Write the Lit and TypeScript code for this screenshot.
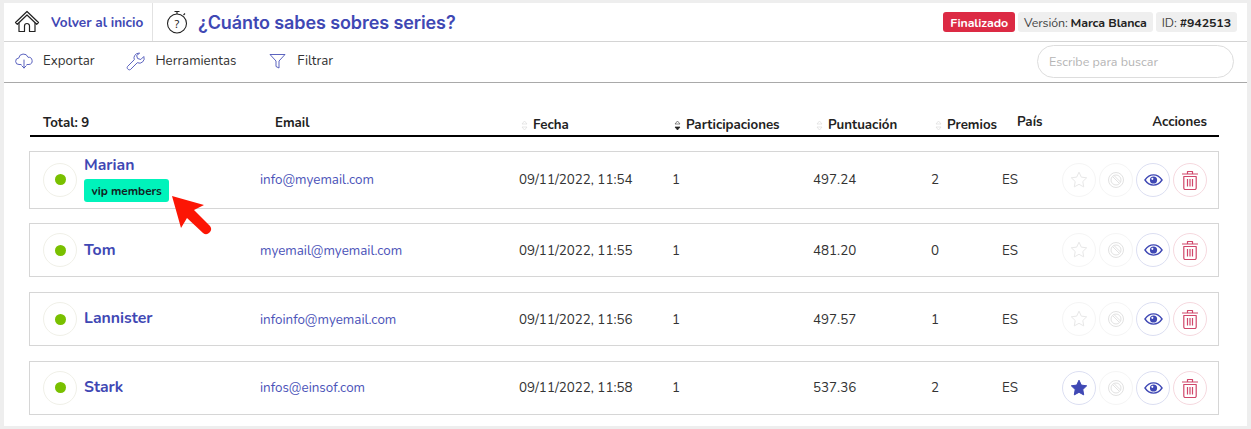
import { LitElement, html, css, svg } from "lit";
import { customElement } from "lit/decorators.js";

const rows = [
  { name: "Marian", tag: "vip members", email: "info@myemail.com", date: "09/11/2022, 11:54", part: "1", score: "497.24", prizes: "2", fav: false },
  { name: "Tom", email: "myemail@myemail.com", date: "09/11/2022, 11:55", part: "1", score: "481.20", prizes: "0", fav: false },
  { name: "Lannister", email: "infoinfo@myemail.com", date: "09/11/2022, 11:56", part: "1", score: "497.57", prizes: "1", fav: false },
  { name: "Stark", email: "infos@einsof.com", date: "09/11/2022, 11:58", part: "1", score: "537.36", prizes: "2", fav: true },
];

const sortIcon = (active = false) => html`<svg class="sort" width="7" height="11" viewBox="0 0 7 11">
  <path d="M3.500 1 6 4H1z" fill="none" stroke=${active ? "#555" : "#ddd"} stroke-width=".7"/>
  <path d="M3.500 10 6 7H1z" fill=${active ? "#222" : "none"} stroke=${active ? "#222" : "#ddd"} stroke-width=".7"/>
</svg>`;

const starPath = svg`<path d="M10 2.200l2.300 4.900 5.400.7-3.900 3.700.9 5.400L10 14.300l-4.700 2.600.9-5.400-3.900-3.700 5.400-.7z"/>`;

@customElement("app-root")
export class AppRoot extends LitElement {
  static styles = css`
    :host { display: block; width: 1251px; height: 429px; background: #eeeeee; box-sizing: border-box; padding: 3px 4px; font-family: "Nunito", "Noto Sans", sans-serif; color: #222; overflow: hidden; }
    * { box-sizing: border-box; }
    .page { background: #fff; height: 423px; position: relative; }
    .top { display: flex; align-items: center; height: 39px; border-bottom: 1px solid #d4d4d4; }
    .back { display: flex; align-items: center; width: 149px; height: 100%; padding-left: 10px; border-right: 1px solid #e2e2e2; flex: none; }
    .back a { margin-left: 11px; color: #3f48b4; font-size: 13.600px; font-weight: 700; letter-spacing: 0; white-space: nowrap; }
    .timer { margin-left: 13px; display: block; }
    h1 { margin: 0 0 0 10px; font: 600 18px "Inter", sans-serif; letter-spacing: -.1px; color: #3f48b4; }
    .badges { margin-left: auto; margin-right: 10px; display: flex; gap: 3px; font-size: 12.400px; }
    .badge { height: 20px; display: flex; align-items: center; gap: 3px; padding: 0 6px; background: #efefef; border-radius: 3px; color: #444; letter-spacing: -.1px; }
    .badge b { color: #222; font-weight: 700; }
    .badge.red { background: #dc2a44; color: #fff; font-weight: 700; padding: 0 7px; }
    .tools { display: flex; align-items: center; height: 41px; border-bottom: 1px solid #a9a9a9; padding: 0 0 2px 11px; font-size: 13.300px; color: #333; letter-spacing: 0; }
    .tool { display: flex; align-items: center; gap: 10px; margin-right: 32px; }
    .search { margin-left: auto; margin-right: 13px; width: 197px; height: 33px; border: 1px solid #ddd; border-radius: 17px; padding-left: 11px; display: flex; align-items: center; font-size: 12.500px; color: #b5b5b5; }
    .head { margin: 28px 28px 0 26px; height: 26px; padding: 0 0 2px 13px; border-bottom: 2px solid #000; display: grid; grid-template-columns: 232px 246px 153px 142px 119px 82px 1fr; font-size: 13.300px; font-weight: 700; color: #222; letter-spacing: 0; }
    .head > div { display: flex; align-items: center; gap: 5px; margin-top: 1px; }
    .head .low { margin-top: 5px; }
    .head .actions { justify-content: space-between; padding-right: 12px; margin-top: -1px; }
    .rows { margin: 14px 28px 0 25px; display: flex; flex-direction: column; gap: 14.800px; }
    .row { border: 1px solid #d6d6d6; min-height: 54px; display: grid; grid-template-columns: 41px 176px 259px 153px 141px 118px 71px 1fr; align-items: center; padding-left: 13px; font-size: 13.400px; color: #333; letter-spacing: 0; }
    .row.tagged { min-height: 57.500px; }
    .dot { width: 34px; height: 34px; border: 1px solid #f0f0e8; border-radius: 50%; display: flex; align-items: center; justify-content: center; }
    .dot i { width: 11px; height: 11px; border-radius: 50%; background: #79c000; display: block; }
    .who { display: flex; flex-direction: column; align-items: flex-start; gap: 5px; margin-top: -1.500px; }
    .name { font-size: 15.800px; font-weight: 700; color: #3f48b4; line-height: 18px; }
    .tag { background: #00f3bb; border-radius: 3px; height: 23px; display: flex; align-items: center; padding: 0 7.500px; font-size: 11.800px; font-weight: 700; color: #122; }
    .email { color: #4a52b8; }
    .last { display: flex; align-items: center; justify-content: space-between; }
    .acts { display: flex; justify-content: flex-end; gap: 3px; padding-right: 11px; }
    .act { width: 34px; height: 34px; border-radius: 50%; border: 1px solid #f5f5f5; display: flex; align-items: center; justify-content: center; }
    .act.blue { border-color: #dcdff2; }
    .act.red { border-color: #f6d9df; }
    .arrow { position: absolute; left: 165px; top: 190px; }
  `;

  render() {
    return html`<div class="page">
      <div class="top">
        <div class="back">
          <svg width="26" height="24" viewBox="0 0 26 24" fill="none" stroke="#222" stroke-width="1.200" stroke-linejoin="round" stroke-linecap="round">
            <path d="M1.500 12.500 13 1.500l11.500 11-1.800 1.800L13 5 3.300 14.300z"/>
            <path d="M5 13v8.500h5.500v-5.500a2.500 2.500 0 0 1 5 0v5.500H21V13"/>
          </svg>
          <a>Volver al inicio</a>
        </div>
        <svg class="timer" width="22" height="26" viewBox="0 0 22 26" fill="none" stroke="#222" stroke-width="1.100">
          <circle cx="11" cy="14.500" r="9.500"/>
          <path d="M8.500 2.500h5M11 2.500V5M17.500 6l1.500-1.500" />
          <text x="11" y="18.500" text-anchor="middle" font-size="11" font-family="Noto Sans" fill="#222" stroke="none">?</text>
        </svg>
        <h1>¿Cuánto sabes sobres series?</h1>
        <div class="badges">
          <span class="badge red">Finalizado</span>
          <span class="badge">Versión: <b>Marca Blanca</b></span>
          <span class="badge">ID: <b>#942513</b></span>
        </div>
      </div>
      <div class="tools">
        <div class="tool">
          <svg width="18" height="16" viewBox="0 0 18 16" fill="none" stroke="#4a52b8" stroke-width=".9" stroke-linecap="round" stroke-linejoin="round">
            <path d="M6 11.500H4a3.200 3.200 0 0 1-.3-6.400A4.800 4.800 0 0 1 13 4.300a3.600 3.600 0 0 1 1 7.200h-2"/>
            <path d="M9 7v8M6.800 12.800 9 15l2.200-2.200"/>
          </svg>
          <span>Exportar</span>
        </div>
        <div class="tool">
          <svg width="19" height="19" viewBox="0 0 19 19" fill="none" stroke="#4a52b8" stroke-width=".9" stroke-linejoin="round">
            <path d="M12.500 1.200a4.800 4.800 0 0 0-4.200 6.500L1.500 14.500a2 2 0 0 0 0 2.200l.8.800a2 2 0 0 0 2.200 0l6.800-6.800A4.800 4.800 0 0 0 17.800 4.500l-3 3-3.200-1-1-3 3-2.300z"/>
          </svg>
          <span>Herramientas</span>
        </div>
        <div class="tool">
          <svg width="19" height="16" viewBox="-1 0 19 16" fill="none" stroke="#4a52b8" stroke-width=".9" stroke-linejoin="round">
            <path d="M1 1.500h15l-6 6.500v7l-3-1.500V8z"/>
          </svg>
          <span>Filtrar</span>
        </div>
        <div class="search">Escribe para buscar</div>
      </div>
      <div class="head">
        <div>Total: 9</div>
        <div>Email</div>
        <div class="low">${sortIcon()}Fecha</div>
        <div class="low">${sortIcon(true)}Participaciones</div>
        <div class="low">${sortIcon()}Puntuación</div>
        <div class="low">${sortIcon()}Premios</div>
        <div class="actions"><span>País</span><span>Acciones</span></div>
      </div>
      <div class="rows">
        ${rows.map((r) => html`<div class="row ${r.tag ? "tagged" : ""}">
          <div class="dot"><i></i></div>
          <div class="who">
            <span class="name">${r.name}</span>
            ${r.tag ? html`<span class="tag">${r.tag}</span>` : ""}
          </div>
          <div class="email">${r.email}</div>
          <div>${r.date}</div>
          <div>${r.part}</div>
          <div>${r.score}</div>
          <div>${r.prizes}</div>
          <div class="last">
            <span>ES</span>
            <div class="acts">
              <div class="act ${r.fav ? "blue" : ""}">
                <svg width="20" height="20" viewBox="0 0 20 20" fill=${r.fav ? "#3f48b4" : "none"} stroke=${r.fav ? "#3f48b4" : "#e8e8e8"} stroke-width="1" stroke-linejoin="round">${starPath}</svg>
              </div>
              <div class="act">
                <svg width="18" height="18" viewBox="0 0 18 18" fill="none" stroke="#e2e2e2" stroke-width="1">
                  <circle cx="9" cy="9" r="7.500"/><circle cx="9" cy="9" r="5"/>
                  <path d="M5.500 5.500l7 7M7 4.500l6.500 6.500" />
                </svg>
              </div>
              <div class="act blue">
                <svg width="19" height="14" viewBox="0 0 20 14" fill="none">
                  <path d="M1 7c2.500-3.600 5.500-5.400 9-5.400S16.500 3.400 19 7c-2.500 3.600-5.500 5.400-9 5.400S3.500 10.600 1 7z" stroke="#3f48b4" stroke-width="1.400"/>
                  <circle cx="10" cy="7" r="3.800" fill="#3f48b4"/><circle cx="8.800" cy="5.800" r="1.100" fill="#fff"/>
                </svg>
              </div>
              <div class="act red">
                <svg width="20" height="22" viewBox="0 0 20 22" fill="none" stroke="#d0466a" stroke-width="1.200" stroke-linejoin="round">
                  <path d="M2 5h16M7.500 5V2.500h5V5"/>
                  <path d="M3.800 7.500v11.500a1.500 1.500 0 0 0 1.500 1.500h9.400a1.500 1.500 0 0 0 1.500-1.500V7.500z"/>
                  <path d="M7.500 10v7.500M10 10v7.500M12.500 10v7.500"/>
                </svg>
              </div>
            </div>
          </div>
        </div>`)}
      </div>
      <svg class="arrow" width="50" height="50" viewBox="0 0 50 50">
        <path d="M3 3 35 12 25 17 41 33a5 5 0 0 1-7 7L18 25l-6 10z" fill="#fc1605"/>
      </svg>
    </div>`;
  }
}
